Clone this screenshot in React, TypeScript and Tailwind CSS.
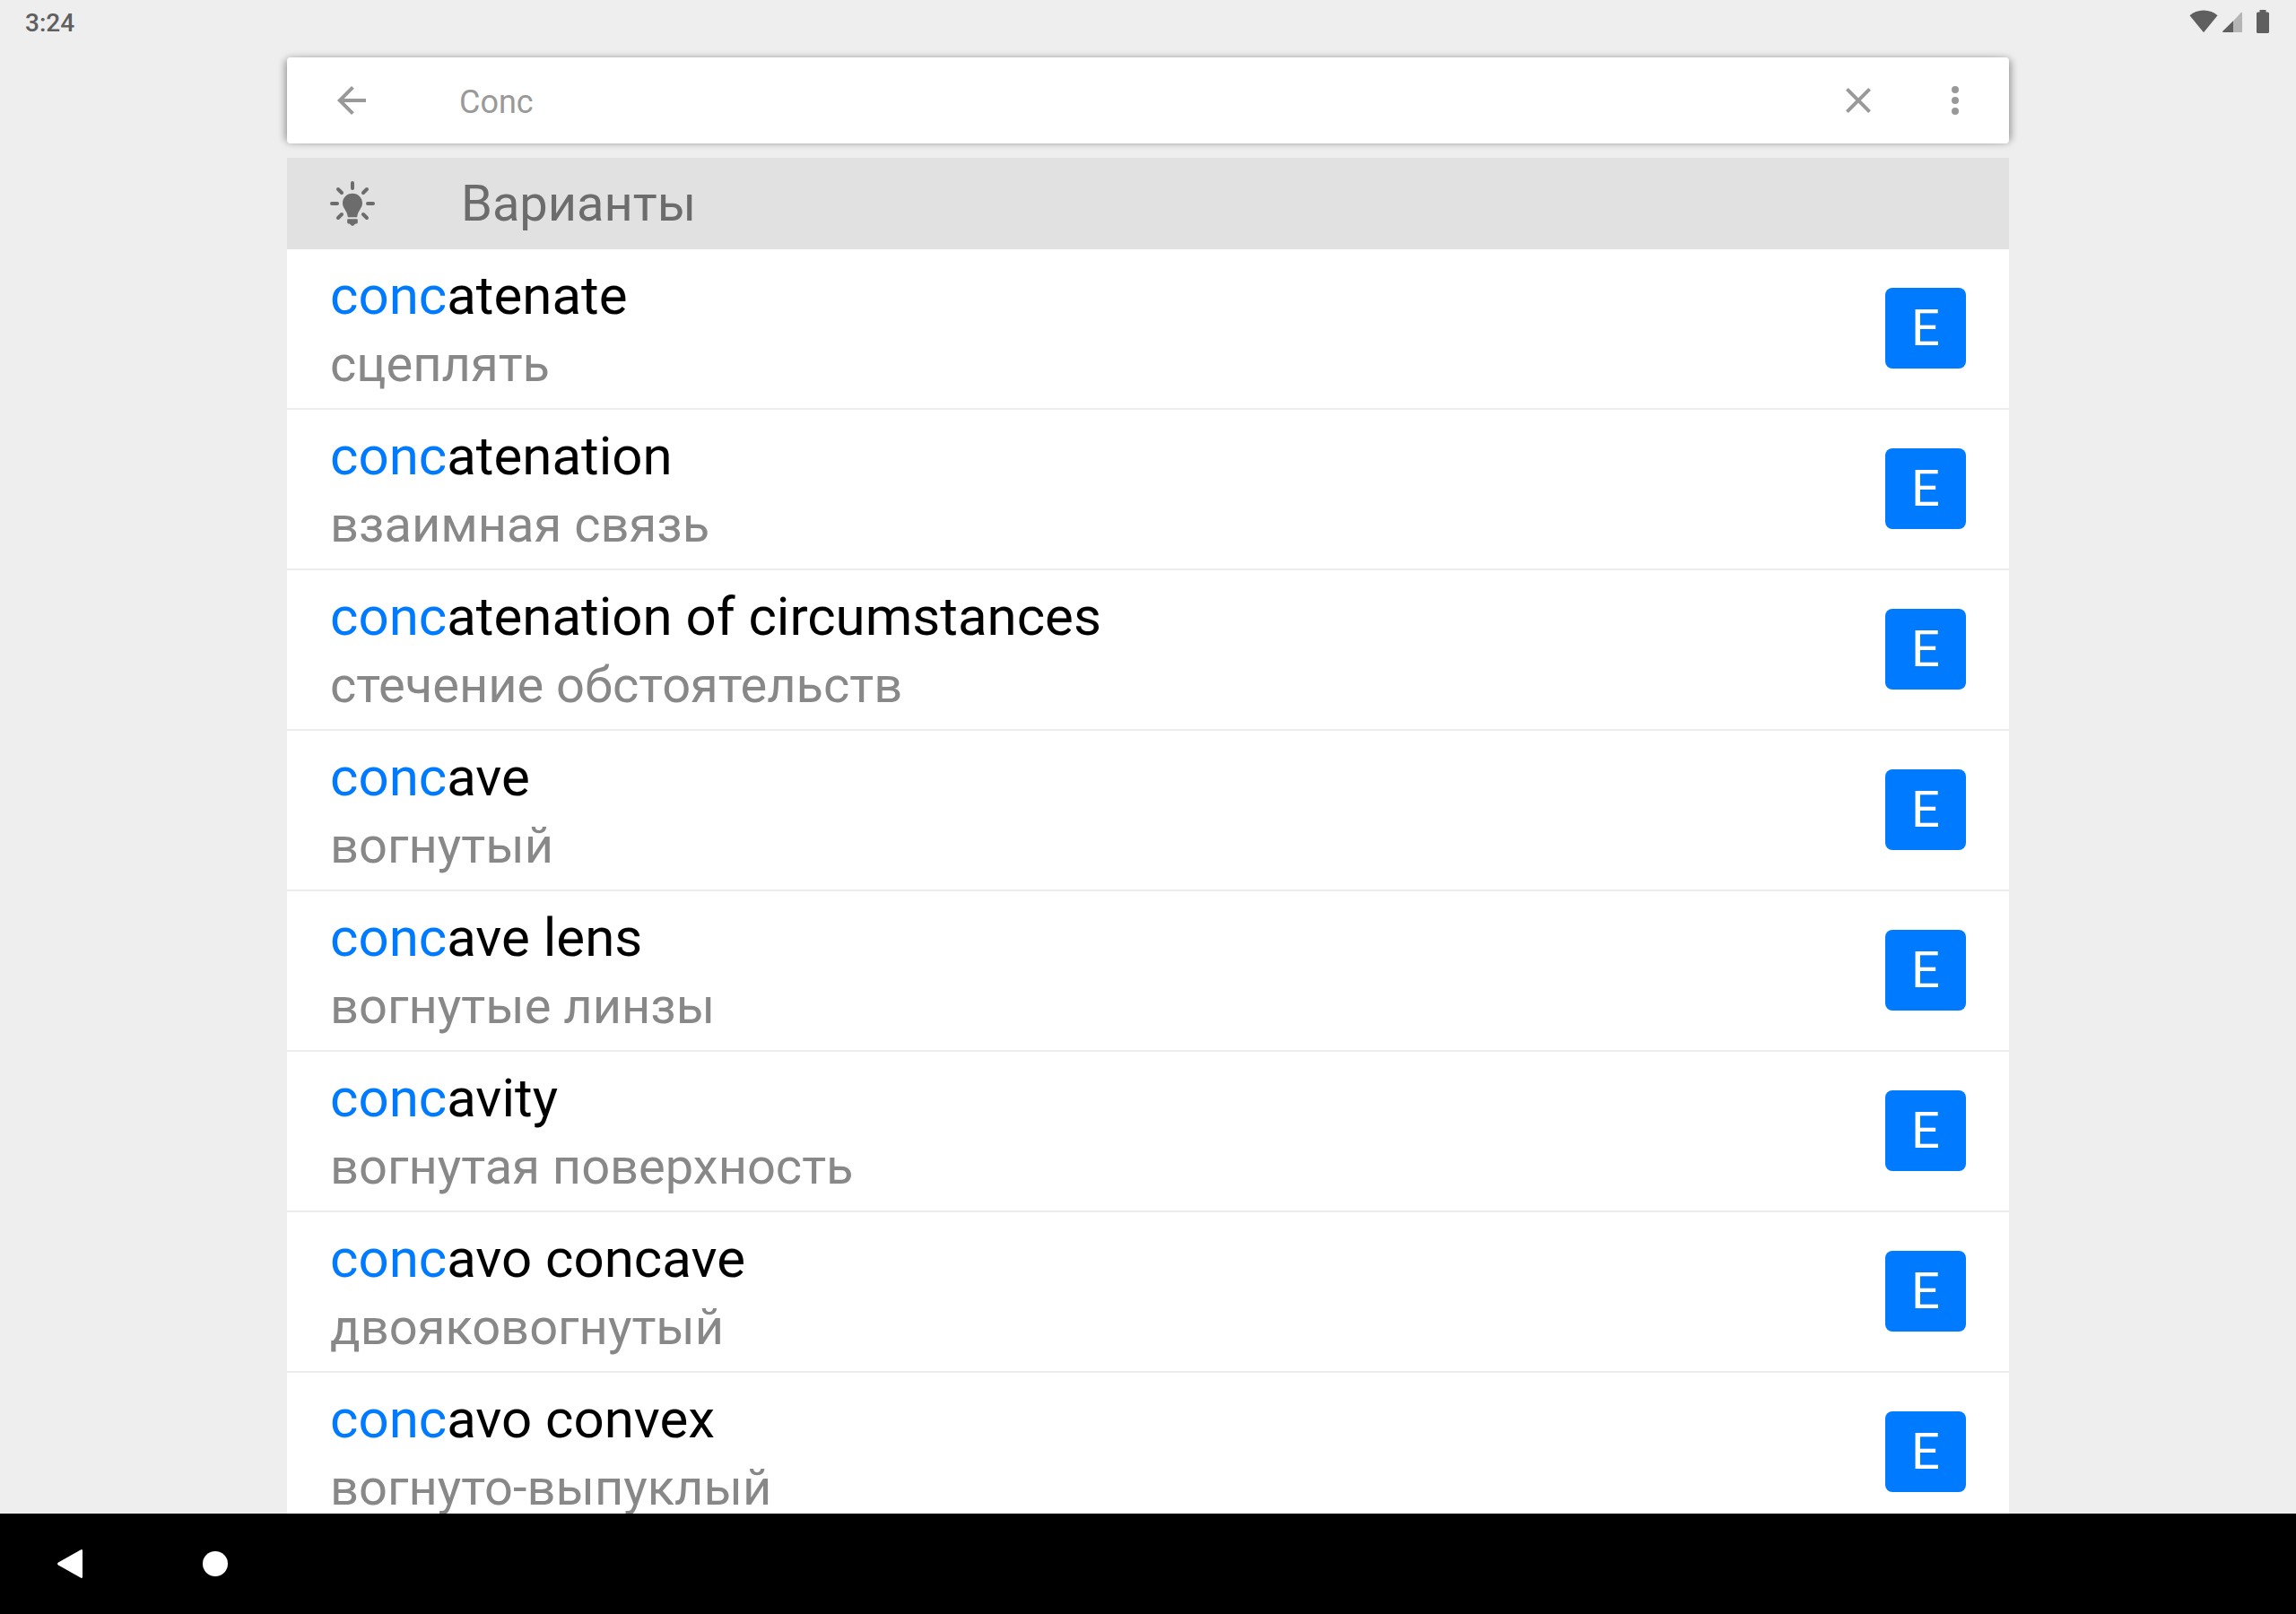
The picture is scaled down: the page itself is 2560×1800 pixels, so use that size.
import { useState } from "react";

type Entry = { word: string; translation: string; lang: string };

const ENTRIES: Entry[] = [
  { word: "concatenate", translation: "сцеплять", lang: "E" },
  { word: "concatenation", translation: "взаимная связь", lang: "E" },
  { word: "concatenation of circumstances", translation: "стечение обстоятельств", lang: "E" },
  { word: "concave", translation: "вогнутый", lang: "E" },
  { word: "concave lens", translation: "вогнутые линзы", lang: "E" },
  { word: "concavity", translation: "вогнутая поверхность", lang: "E" },
  { word: "concavo concave", translation: "двояковогнутый", lang: "E" },
  { word: "concavo convex", translation: "вогнуто-выпуклый", lang: "E" },
];

const ICON_BTN = "flex size-12 shrink-0 items-center justify-center text-[#999999]";

function StatusBar() {
  return (
    <header className="flex h-12 shrink-0 items-center justify-between pr-[30px] pl-7 text-[#5f5f5f]">
      <span className="text-[28px] leading-[48px] font-medium pt-[3px]">3:24</span>
      <div className="flex items-center">
        <svg width="32" height="26" viewBox="0 0 32 26" fill="currentColor" aria-label="Wi-Fi">
          <path d="M0.5 6.2C4.5 2.6 10 0.5 16 0.5s11.500 2.100 15.500 5.700L16.800 24.300a1 1 0 0 1-1.600 0Z" />
        </svg>
        <svg className="ml-[5px]" width="22" height="26" viewBox="0 0 22 26" fill="currentColor" aria-label="Signal">
          <path d="M12 12.500 20.300 3.500Q22 2 22 4V25H12Z" opacity=".4" />
          <path d="M12 12.300V25H1Q-.6 25 .6 23.600Z" />
        </svg>
        <svg className="ml-4" width="14" height="26" viewBox="0 0 14 26" fill="currentColor" aria-label="Battery">
          <path d="M3.500 0h7v2.500H12.500A1.500 1.500 0 0 1 14 4V24.500A1.500 1.500 0 0 1 12.500 26H1.500A1.500 1.500 0 0 1 0 24.500V4A1.500 1.500 0 0 1 1.500 2.500H3.500Z" />
        </svg>
      </div>
    </header>
  );
}

function SearchBar({ value, onChange }: { value: string; onChange: (v: string) => void }) {
  return (
    <div className="flex h-24 shrink-0 items-center rounded-sm bg-white pr-9 pl-12 shadow-[7px_0_8px_-4px_rgba(0,0,0,0.22),-7px_0_8px_-4px_rgba(0,0,0,0.22),0_0_8px_rgba(0,0,0,0.22)]">
      <button type="button" aria-label="Back" className={ICON_BTN}>
        <svg className="size-12" viewBox="0 0 24 24" fill="currentColor">
          <path d="M20 11H7.830l5.590-5.590L12 4l-8 8 8 8 1.410-1.410L7.830 13H20v-2z" />
        </svg>
      </button>
      <input
        type="text"
        aria-label="Search"
        value={value}
        onChange={(e) => onChange(e.target.value)}
        className="ml-24 min-w-0 flex-1 bg-transparent pt-[3px] text-[36px] leading-[48px] text-[#999999] outline-none"
      />
      <button type="button" aria-label="Clear" onClick={() => onChange("")} className={ICON_BTN}>
        <svg className="size-12" viewBox="0 0 24 24" fill="currentColor">
          <path d="M19 6.410 17.590 5 12 10.590 6.410 5 5 6.410 10.590 12 5 17.590 6.410 19 12 13.410 17.590 19 19 17.590 13.410 12z" />
        </svg>
      </button>
      <button type="button" aria-label="More options" className={`${ICON_BTN} ml-[60px]`}>
        <svg className="size-12" viewBox="0 0 24 24" fill="currentColor">
          <circle cx="12" cy="6" r="2" />
          <circle cx="12" cy="12" r="2" />
          <circle cx="12" cy="18" r="2" />
        </svg>
      </button>
    </div>
  );
}

function BulbIcon() {
  return (
    <svg className="size-[50px] shrink-0" viewBox="0 0 50 50" fill="currentColor" aria-hidden="true">
      <path
        d="M25 2v6M2 25h6M42 25h6M9 9l4 4M41 9l-4 4M9 41l4-4M41 41l-4-4"
        fill="none"
        stroke="currentColor"
        strokeWidth="4"
        strokeLinecap="round"
      />
      <path d="M25 13.700c-6.300 0-11 4.700-11 11 0 5 4.500 8 5.500 13.500.2 1.300.4 2.100 1 2.100h9c.6 0 .8-.8 1-2.100C31.500 32.700 36 29.700 36 24.700c0-6.300-4.700-11-11-11Z" />
      <path d="M20 42.300h10q.8 0 .8.800v2.900q0 1.500-1.500 1.500h-1l-1.800 1.700q-1.500 1-3 0l-1.800-1.700h-1q-1.500 0-1.500-1.500v-2.900q0-.8.800-.8Z" />
    </svg>
  );
}

function EntryRow({ entry, query }: { entry: Entry; query: string }) {
  // only the leading part of the word gets highlighted
  const hit = entry.word.startsWith(query.toLowerCase()) ? query.length : 0;
  return (
    <li className="flex h-[179px] items-center justify-between border-b-2 border-[#ececec] bg-white px-12 pb-px">
      <div className="min-w-0 whitespace-nowrap">
        <p className="text-[60px] leading-[80px] text-black">
          <span className="text-[#007bff]">{entry.word.slice(0, hit)}</span>
          {entry.word.slice(hit)}
        </p>
        <p className="text-[56px] leading-[72px] text-[#888888]">{entry.translation}</p>
      </div>
      <span className="flex size-[90px] shrink-0 items-center justify-center rounded-lg bg-[#007bff] text-[56px] leading-[66px] text-white">
        {entry.lang}
      </span>
    </li>
  );
}

function NavBar() {
  return (
    <nav className="flex h-28 shrink-0 items-center gap-[130px] bg-black pl-[62px] text-white">
      <button type="button" aria-label="System back">
        <svg width="32" height="32" viewBox="0 0 32 32" fill="currentColor">
          <path d="M28.300.3Q30 -.4 30 1.500V30.500Q30 32.400 28.300 31.700L3 17.500Q1 16 3 14.500Z" />
        </svg>
      </button>
      <button type="button" aria-label="Home">
        <svg width="32" height="32" viewBox="0 0 32 32" fill="currentColor">
          <circle cx="16" cy="16" r="14" />
        </svg>
      </button>
    </nav>
  );
}

export default function App() {
  const [query, setQuery] = useState("Conc");

  return (
    <div className="flex h-screen flex-col bg-[#eeeeee] font-[Roboto,sans-serif]">
      <StatusBar />
      <main className="mx-auto mt-4 flex min-h-0 w-3/4 flex-1 flex-col">
        <SearchBar value={query} onChange={setQuery} />
        <section className="mt-4 min-h-0 flex-1 overflow-hidden">
          <div className="flex h-[102px] items-center bg-[#e1e1e1] px-12 text-[#6c6c6c]">
            <BulbIcon />
            <h1 className="ml-24 text-[56px] leading-[66px]">Варианты</h1>
          </div>
          <ul>
            {ENTRIES.map((e) => (
              <EntryRow key={e.word} entry={e} query={query} />
            ))}
          </ul>
        </section>
      </main>
      <NavBar />
    </div>
  );
}
